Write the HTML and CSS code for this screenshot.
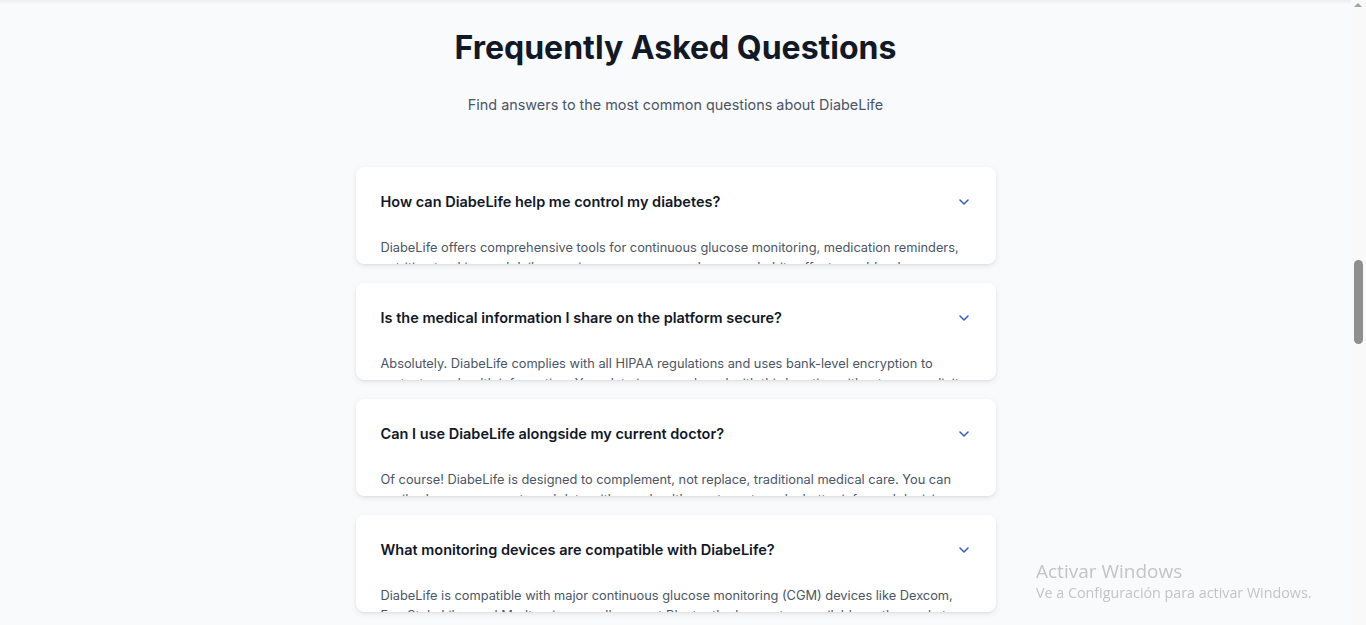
FILE: index.html
```html
<!DOCTYPE html>
<html lang="en">
<head>
<meta charset="utf-8">
<title>FAQ - DiabeLife</title>
<link rel="stylesheet" href="styles.css">
</head>
<body>
<div class="topshade"></div>
<main class="faq">
  <h1 class="faq-title">Frequently Asked Questions</h1>
  <p class="faq-sub">Find answers to the most common questions about DiabeLife</p>
  <div class="faq-list">
    <div class="card">
      <div class="q"><span>How can DiabeLife help me control my diabetes?</span>
        <svg class="chev" viewBox="0 0 24 24" width="16" height="16"><path d="M6 9l6 6 6-6" fill="none" stroke="currentColor" stroke-width="2.4" stroke-linecap="round" stroke-linejoin="round"/></svg></div>
      <div class="a"><p>DiabeLife offers comprehensive tools for continuous glucose monitoring, medication reminders, nutrition tracking and daily exercise, so you can see how your habits affect your blood sugar levels every day.</p></div>
    </div>
    <div class="card">
      <div class="q"><span>Is the medical information I share on the platform secure?</span>
        <svg class="chev" viewBox="0 0 24 24" width="16" height="16"><path d="M6 9l6 6 6-6" fill="none" stroke="currentColor" stroke-width="2.4" stroke-linecap="round" stroke-linejoin="round"/></svg></div>
      <div class="a"><p>Absolutely. DiabeLife complies with all HIPAA regulations and uses bank-level encryption to protect your health information. Your data is never shared with third parties without your explicit consent.</p></div>
    </div>
    <div class="card">
      <div class="q"><span>Can I use DiabeLife alongside my current doctor?</span>
        <svg class="chev" viewBox="0 0 24 24" width="16" height="16"><path d="M6 9l6 6 6-6" fill="none" stroke="currentColor" stroke-width="2.4" stroke-linecap="round" stroke-linejoin="round"/></svg></div>
      <div class="a"><p>Of course! DiabeLife is designed to complement, not replace, traditional medical care. You can easily share your reports and data with your healthcare team to make better informed decisions together.</p></div>
    </div>
    <div class="card">
      <div class="q"><span>What monitoring devices are compatible with DiabeLife?</span>
        <svg class="chev" viewBox="0 0 24 24" width="16" height="16"><path d="M6 9l6 6 6-6" fill="none" stroke="currentColor" stroke-width="2.4" stroke-linecap="round" stroke-linejoin="round"/></svg></div>
      <div class="a"><p>DiabeLife is compatible with major continuous glucose monitoring (CGM) devices like Dexcom, FreeStyle Libre and Medtronic, as well as most Bluetooth glucometers available on the market today.</p></div>
    </div>
  </div>
</main>
<div class="scrollbar"><span class="sb-arrow"></span><span class="sb-thumb"></span></div>
<div class="watermark">
  <div class="wm-title">Activar Windows</div>
  <div class="wm-sub">Ve a Configuración para activar Windows.</div>
</div>
</body>
</html>
```
FILE: styles.css
```css
* { box-sizing: border-box; }
html, body { margin: 0; padding: 0; height: 100%; overflow: hidden; }
body {
  background: #f9fafb;
  font-family: Inter, "Noto Sans", sans-serif;
  color: #111827;
  padding-right: 15px;
}
.topshade {
  position: fixed; left: 0; right: 0; top: 0; height: 4px;
  background: linear-gradient(#ececee, rgba(249,250,251,0));
}
.faq {
  width: 640px;
  margin: 0 auto;
  padding-top: 28px;
  display: flex;
  flex-direction: column;
}
.faq-title {
  margin: 0;
  text-align: center;
  font-size: 32px;
  line-height: 40px;
  font-weight: 700;
  color: #111827;
}
.faq-sub {
  margin: 26px 0 0;
  text-align: center;
  font-size: 14.4px;
  line-height: 22px;
  color: #4b5563;
}
.faq-list {
  margin-top: 51px;
  display: flex;
  flex-direction: column;
  gap: 19px;
}
.card {
  background: #fff;
  border-radius: 8px;
  box-shadow: 0 2px 6px rgba(0,0,0,0.08), 0 1px 2px rgba(0,0,0,0.05);
  overflow: hidden;
}
.q {
  display: flex;
  align-items: center;
  justify-content: space-between;
  padding: 23px 24px 0 25px;
  font-size: 14.5px;
  line-height: 24px;
  font-weight: 600;
  color: #111827;
}
.chev { color: #3b5fc8; flex: none; margin-right: 0; }
.a {
  height: 50px;
  overflow: hidden;
  padding: 0 24px 0 25px;
}
.a p {
  margin: 24px 0 0;
  font-size: 12.8px;
  line-height: 20px;
  color: #4b5563;
}
.scrollbar {
  position: fixed; top: 0; right: 0; bottom: 0; width: 15px;
  background: #f9f9f9;
}
.sb-arrow {
  position: absolute; top: 3px; left: 3px;
  width: 0; height: 0;
  border-left: 4.5px solid transparent;
  border-right: 4.5px solid transparent;
  border-bottom: 4px solid #a3a3a3;
}
.sb-thumb {
  position: absolute; top: 260px; left: 3px; width: 9px; height: 84px;
  background: #8f8f8f; border-radius: 5px;
}
.watermark {
  position: fixed; left: 1036px; top: 559px;
  font-family: "Open Sans", "Noto Sans", sans-serif;
  color: #c4c4c4;
}
.wm-title { font-size: 19px; line-height: 24px; }
.wm-sub { font-size: 14.3px; line-height: 20px; margin-top: 0; }
```
